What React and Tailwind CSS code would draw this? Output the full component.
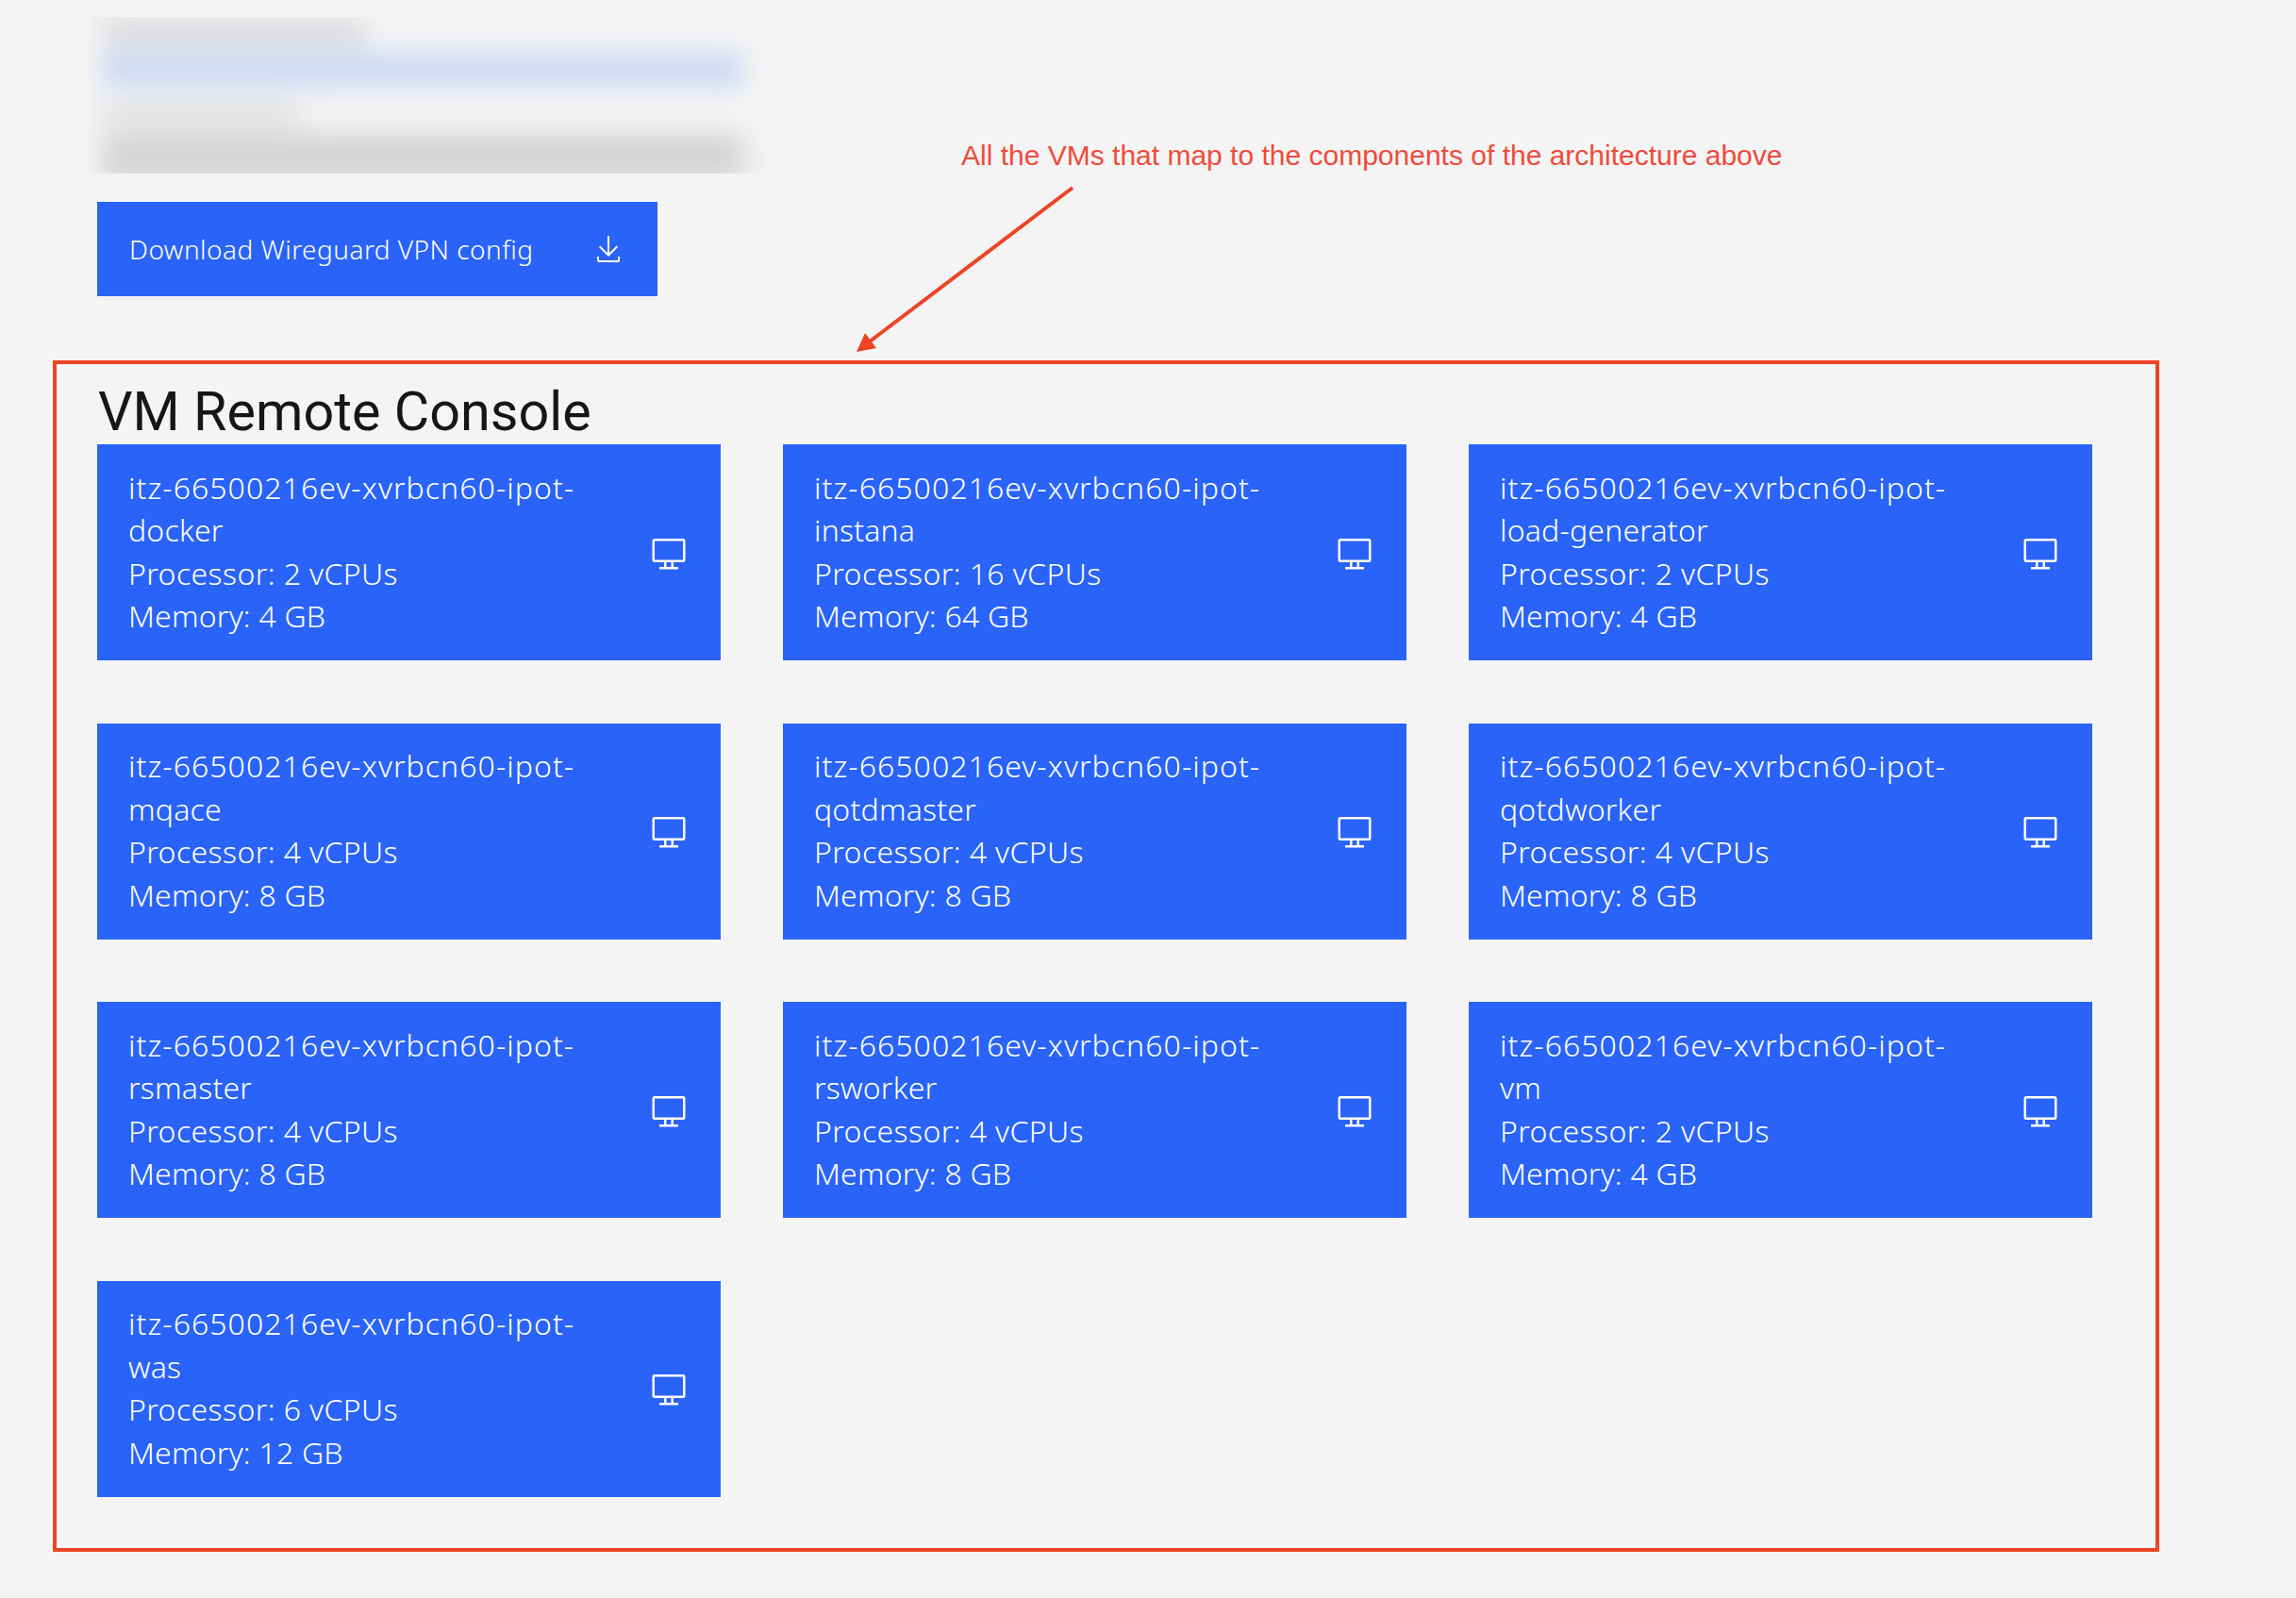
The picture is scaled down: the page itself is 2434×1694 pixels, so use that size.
const vms = [
  ["docker", "2", "4"],
  ["instana", "16", "64"],
  ["load-generator", "2", "4"],
  ["mqace", "4", "8"],
  ["qotdmaster", "4", "8"],
  ["qotdworker", "4", "8"],
  ["rsmaster", "4", "8"],
  ["rsworker", "4", "8"],
  ["vm", "2", "4"],
  ["was", "6", "12"],
];

function ScreenIcon() {
  return (
    <svg viewBox="0 0 32 32" fill="#fff" className="w-10 h-10 shrink-0">
      <path d="M28,4H4A2,2,0,0,0,2,6V22a2,2,0,0,0,2,2h8v4H8v2H24V28H20V24h8a2,2,0,0,0,2-2V6A2,2,0,0,0,28,4ZM18,28H14V24h4Zm10-6H4V6H28Z" />
    </svg>
  );
}

function DownloadIcon() {
  return (
    <svg viewBox="0 0 32 32" fill="#fff" className="w-8 h-8 shrink-0">
      <path d="M26,24v4H6V24H4v4a2,2,0,0,0,2,2H26a2,2,0,0,0,2-2V24Z" />
      <path d="M26,14 24.59,12.59 17,20.17 17,2 15,2 15,20.17 7.41,12.59 6,14 16,24 26,14Z" />
    </svg>
  );
}

function VmCard({ name, cpu, mem }) {
  return (
    <div className="h-[229px] bg-[#2963f8] text-white flex items-center justify-between pl-[33px] pr-[35px] text-[32px] leading-[45.5px] font-['Noto_Sans',sans-serif] font-light">
      <div className="w-[520px] pb-[2px]">
        <div className="tracking-[1.05px] whitespace-nowrap">itz-66500216ev-xvrbcn60-ipot-</div>
        <div className="tracking-[0.2px]">{name}</div>
        <div className="tracking-[0.4px]">Processor: {cpu} vCPUs</div>
        <div className="tracking-[0.2px]">Memory: {mem} GB</div>
      </div>
      <ScreenIcon />
    </div>
  );
}

export default function App() {
  return (
    <div className="relative w-[2434px] h-[1694px] bg-[#f4f4f4] overflow-hidden">
      <div className="pt-[18px] pl-[94px]">
        <div className="relative w-[731px] h-[166px] overflow-hidden">
          <div className="flex flex-col pl-[14px] blur-[14px]">
            <div className="w-[280px] h-[30px] mt-[2px] bg-[#dadbde]" />
            <div className="w-[680px] h-[36px] mt-[6px] bg-[#ccd8f3]" />
            <div className="w-[210px] h-[26px] mt-[16px] bg-[#e0e1e2]" />
            <div className="w-[680px] h-[50px] mt-[8px] bg-[#d3d3d3]" />
          </div>
        </div>
      </div>

      <div className="ml-[103px] mt-[30px] w-[594px] h-[100px] bg-[#2963f8] text-white flex items-center justify-between pl-[34px] pr-[36px] text-[28px] tracking-[0.47px] font-['Noto_Sans',sans-serif] font-light">
        <span>Download Wireguard VPN config</span>
        <DownloadIcon />
      </div>

      <section className="ml-[56px] mt-[68px] w-[2233px] h-[1263px] border-[4px] border-[#ee4325] pl-[43px] pr-[67px]">
        <h2 className="h-[85px] pt-[13px] pl-[1px] text-[57.5px] leading-[76px] text-[#161616] font-['Roboto',sans-serif] font-normal">VM Remote Console</h2>
        <div className="grid grid-cols-3 gap-x-[66px] gap-y-[66.5px]">
          {vms.map(([name, cpu, mem]) => (
            <VmCard key={name} name={name} cpu={cpu} mem={mem} />
          ))}
        </div>
      </section>

      <div className="absolute left-[1019px] top-[146px] text-[30px] leading-[38px] text-[#ee4b3c] whitespace-nowrap font-['Liberation_Sans',sans-serif]">
        All the VMs that map to the components of the architecture above
      </div>
      <svg className="absolute left-[900px] top-[190px] w-[250px] h-[190px]" viewBox="900 190 250 190">
        <line x1="1137" y1="199" x2="918" y2="365" stroke="#ee4325" strokeWidth="4" />
        <polygon points="908,373 917,353 929,369" fill="#ee4325" />
      </svg>
    </div>
  );
}
